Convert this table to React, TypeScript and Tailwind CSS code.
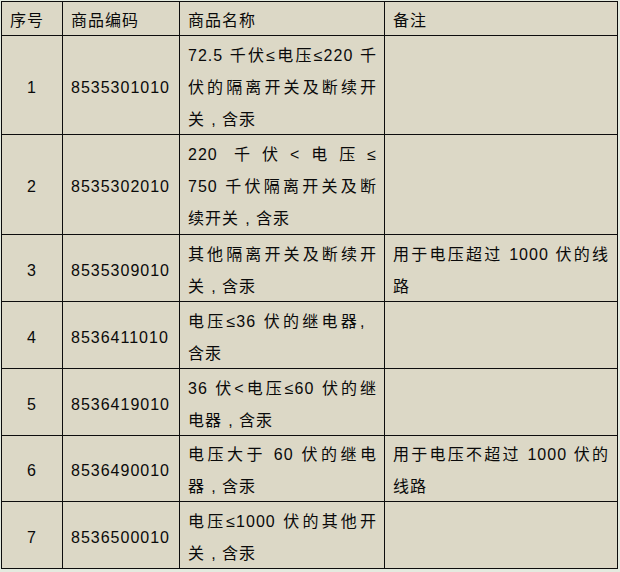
import React from "react";

type Row = { no: string; code: string; name: string[]; note?: string[] };

const rows: Row[] = [
  { no: "1", code: "8535301010", name: ["72.5 千伏≤电压≤220 千", "伏的隔离开关及断续开", "关，含汞"] },
  { no: "2", code: "8535302010", name: ["220 千伏<电压≤", "750 千伏隔离开关及断", "续开关，含汞"] },
  { no: "3", code: "8535309010", name: ["其他隔离开关及断续开", "关，含汞"], note: ["用于电压超过 1000 伏的线", "路"] },
  { no: "4", code: "8536411010", name: ["电压≤36 伏的继电器，", "含汞"] },
  { no: "5", code: "8536419010", name: ["36 伏<电压≤60 伏的继", "电器，含汞"] },
  { no: "6", code: "8536490010", name: ["电压大于 60 伏的继电", "器，含汞"], note: ["用于电压不超过 1000 伏的", "线路"] },
  { no: "7", code: "8536500010", name: ["电压≤1000 伏的其他开", "关，含汞"] },
];

function Txt({ s }: { s: string }) {
  const parts = s.split("，");
  return (
    <>
      {parts.map((p, i) => (
        <React.Fragment key={i}>
          {p}
          {i < parts.length - 1 && (
            <span className="inline-block w-[17px] text-center tracking-normal">,</span>
          )}
        </React.Fragment>
      ))}
    </>
  );
}

function Lines({ lines }: { lines: string[] }) {
  return (
    <>
      {lines.map((l, i) => (
        <div
          key={i}
          className={
            i < lines.length - 1
              ? "text-justify [text-align-last:justify] whitespace-nowrap"
              : "text-left whitespace-nowrap"
          }
        >
          <Txt s={l} />
        </div>
      ))}
    </>
  );
}

const cell = "bg-[#dcd8c6] flex flex-col justify-center pt-[5px] leading-[32px]";

export default function App() {
  return (
    <div
      className="w-[620px] h-[572px] bg-[#e4eadf] overflow-hidden pt-px pl-px text-[16px] tracking-[1px] text-[#0a0a0a]"
      style={{ fontFamily: '"Liberation Sans", Arial, "Noto Sans CJK SC", sans-serif' }}
    >
      <div className="grid w-fit grid-cols-[60px_116px_204px_232px] grid-rows-[33px_98px_99px_66px_66px_66px_65px_66px] gap-px bg-[#0d0d0d] p-px">
        <div className={`${cell} pl-[8px]`}>序号</div>
        <div className={`${cell} pl-[8px]`}>商品编码</div>
        <div className={`${cell} pl-[8px]`}>商品名称</div>
        <div className={`${cell} pl-[8px]`}>备注</div>
        {rows.map((r) => (
          <React.Fragment key={r.no}>
            <div className={`${cell} items-center`}>{r.no}</div>
            <div className={`${cell} pl-[8px]`}>{r.code}</div>
            <div className={`${cell} pl-[8px] pr-[7px]`}>
              <Lines lines={r.name} />
            </div>
            <div className={`${cell} pl-[8px] pr-[8px]`}>
              {r.note ? <Lines lines={r.note} /> : null}
            </div>
          </React.Fragment>
        ))}
      </div>
    </div>
  );
}
